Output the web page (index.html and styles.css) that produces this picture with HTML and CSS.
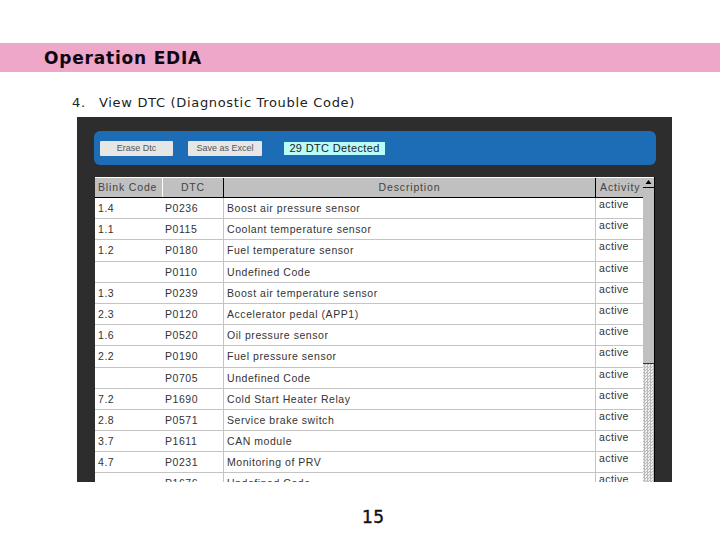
FILE: index.html
```html
<!DOCTYPE html>
<html lang="en">
<head>
    <meta charset="UTF-8">
    <title>Operation EDIA</title>
    <link rel="stylesheet" href="styles.css">
</head>
<body>
    <header class="band">
        <h1>Operation EDIA</h1>
    </header>

    <p class="step"><span class="step-num">4.</span>View DTC (Diagnostic Trouble Code)</p>

    <main class="shot">
        <div class="toolbar">
            <button class="tool-btn btn-erase">Erase Dtc</button>
            <button class="tool-btn btn-save">Save as Excel</button>
            <div class="detected">29 DTC Detected</div>
        </div>

        <div class="grid-wrap">
            <div class="grid">
                <div class="row head">
                    <div>Blink Code</div>
                    <div class="center">DTC</div>
                    <div class="center">Description</div>
                    <div>Activity</div>
                </div>
                <div class="row"><div>1.4</div><div>P0236</div><div>Boost air pressure sensor</div><div class="act">active</div></div>
                <div class="row"><div>1.1</div><div>P0115</div><div>Coolant temperature sensor</div><div class="act">active</div></div>
                <div class="row"><div>1.2</div><div>P0180</div><div>Fuel temperature sensor</div><div class="act">active</div></div>
                <div class="row"><div></div><div>P0110</div><div>Undefined Code</div><div class="act">active</div></div>
                <div class="row"><div>1.3</div><div>P0239</div><div>Boost air temperature sensor</div><div class="act">active</div></div>
                <div class="row"><div>2.3</div><div>P0120</div><div>Accelerator pedal (APP1)</div><div class="act">active</div></div>
                <div class="row"><div>1.6</div><div>P0520</div><div>Oil pressure sensor</div><div class="act">active</div></div>
                <div class="row"><div>2.2</div><div>P0190</div><div>Fuel pressure sensor</div><div class="act">active</div></div>
                <div class="row"><div></div><div>P0705</div><div>Undefined Code</div><div class="act">active</div></div>
                <div class="row"><div>7.2</div><div>P1690</div><div>Cold Start Heater Relay</div><div class="act">active</div></div>
                <div class="row"><div>2.8</div><div>P0571</div><div>Service brake switch</div><div class="act">active</div></div>
                <div class="row"><div>3.7</div><div>P1611</div><div>CAN module</div><div class="act">active</div></div>
                <div class="row"><div>4.7</div><div>P0231</div><div>Monitoring of PRV</div><div class="act">active</div></div>
                <div class="row"><div></div><div>P1676</div><div>Undefined Code</div><div class="act">active</div></div>
            </div>
            <div class="scrollbar">
                <div class="scroll-up">
                    <svg width="11" height="13" viewBox="0 0 11 13"><path d="M5.5 2 L8.5 6 H2.5 Z" fill="#000"/><path d="M0 9.5 H11" stroke="#000"/></svg>
                </div>
                <div class="scroll-thumb"></div>
                <div class="scroll-track"></div>
            </div>
        </div>
    </main>

    <footer class="page-num">15</footer>
</body>
</html>
```

FILE: styles.css
```css
* {
    margin: 0;
    padding: 0;
    box-sizing: border-box;
}

body {
    width: 720px;
    height: 540px;
    overflow: hidden;
    background: white;
    padding-top: 43px;
    font-family: "DejaVu Sans", Verdana, sans-serif;
    color: #111;
}

.band {
    height: 29px;
    background-color: #eea6c9;
    padding-left: 44px;
    padding-top: 1px;
    display: flex;
    align-items: center;
}

h1 {
    font-size: 17px;
    font-weight: bold;
    letter-spacing: 0.8px;
    color: #0c0510;
}

.step {
    margin-top: 23px;
    margin-left: 72px;
    height: 16px;
    font-size: 13px;
    line-height: 16px;
    letter-spacing: 0.68px;
    color: #222;
}

.step-num {
    display: inline-block;
    width: 27px;
}

.shot {
    margin-top: 6px;
    margin-left: 77px;
    width: 595px;
    height: 365px;
    overflow: hidden;
    background-color: #2d2d2d;
    padding: 14px 16px 0 17px;
    font-family: "Liberation Sans", Arial, sans-serif;
}

.toolbar {
    height: 34px;
    background-color: #1c6db5;
    border-radius: 6px;
    display: flex;
    align-items: center;
    padding-left: 6px;
}

.tool-btn {
    width: 73px;
    height: 15px;
    border: none;
    background-color: #e6e6e6;
    font-family: inherit;
    font-size: 9px;
    color: #555;
    border-radius: 1px;
}

.btn-save {
    margin-left: 15px;
    width: 74px;
}

.detected {
    margin-left: 22px;
    width: 101px;
    height: 13px;
    background-color: #b8fbfb;
    font-size: 11px;
    line-height: 13px;
    letter-spacing: 0.35px;
    text-align: center;
    color: #222;
}

.grid-wrap {
    margin-top: 12px;
    margin-left: 1px;
    display: flex;
    width: 560px;
    height: 305px;
    background: white;
    overflow: hidden;
    border-right: 1px solid #000;
}

.grid {
    width: 548px;
    flex-shrink: 0;
}

.row {
    display: grid;
    grid-template-columns: 67px 61px 372px 48px;
    height: 21.2px;
    border-bottom: 1px solid #c4c4c4;
    font-size: 10.5px;
    line-height: 21px;
    letter-spacing: 0.55px;
    color: #333;
}

.row > div {
    padding-left: 3px;
    white-space: nowrap;
    overflow: hidden;
}

.row > div:nth-child(3),
.row > div:nth-child(4) {
    border-left: 1px solid #c4c4c4;
}

.row .act {
    line-height: 13px;
    padding-left: 3px;
    letter-spacing: 0.4px;
}

.head {
    height: 21px;
    background-color: #c0c0c0;
    border-top: 1px solid #fff;
    border-bottom: 1px solid #000;
    line-height: 19px;
    letter-spacing: 0.85px;
    color: #444;
}

.head > div:nth-child(2) {
    border-left: 1px solid #fff;
}

.head > div:nth-child(3),
.head > div:nth-child(4) {
    border-left: 1px solid #000;
}

.head > div:nth-child(4) {
    padding-left: 4px;
    letter-spacing: 0.9px;
}

.head .center {
    padding-left: 0;
    text-align: center;
}

.scrollbar {
    width: 11px;
    display: flex;
    flex-direction: column;
    flex-shrink: 0;
}

.scroll-up {
    height: 20px;
    background-color: #c0c0c0;
    border-top: 1px solid #fff;
    line-height: 0;
}

.scroll-thumb {
    height: 167px;
    background-color: #c0c0c0;
    border-bottom: 1px solid #333;
}

.scroll-track {
    flex: 1;
    background-color: #fff;
    background-image: conic-gradient(#bbb 25%, #eee 0 50%, #bbb 0 75%, #eee 0);
    background-size: 3px 3px;
}

.page-num {
    margin-top: 25px;
    margin-left: 362px;
    font-size: 17px;
    line-height: 20px;
    letter-spacing: 0.5px;
    color: #111;
    -webkit-text-stroke: 0.4px #111;
}
```
